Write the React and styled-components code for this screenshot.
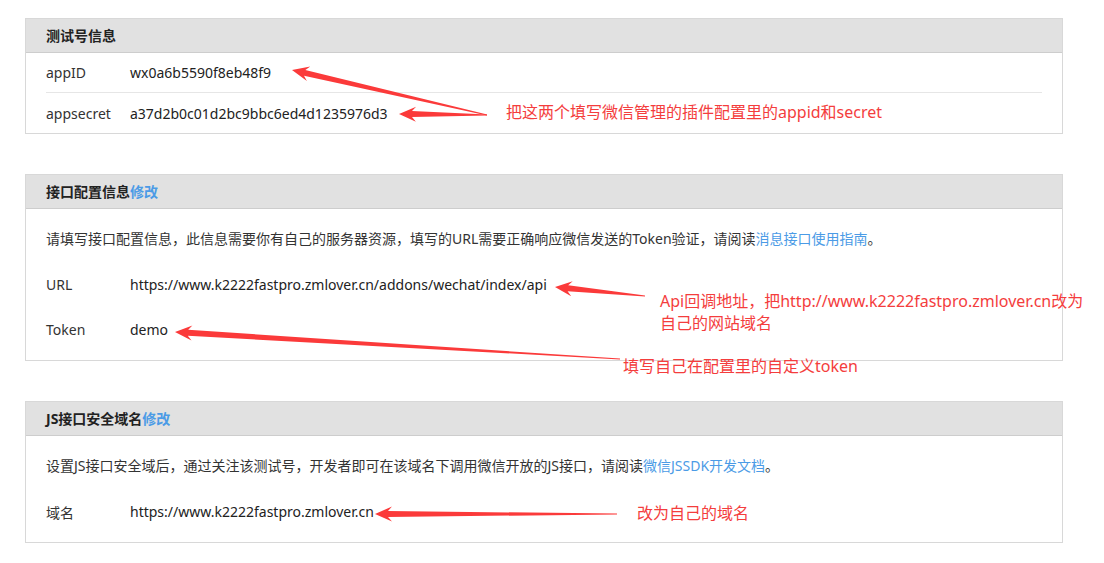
import React from "react";
import styled, { createGlobalStyle } from "styled-components";

const GlobalStyle = createGlobalStyle`
  html, body {
    margin: 0;
    padding: 0;
    background: #fff;
  }
  body {
    font-family: "Noto Sans", "Noto Sans CJK SC", sans-serif;
    color: #333;
  }
  * {
    box-sizing: border-box;
  }
`;

const Page = styled.div`
  position: relative;
  width: 1104px;
  height: 563px;
  padding: 18px 0 0 25px;
  overflow: hidden;
`;

const Panel = styled.section`
  width: 1038px;
  border: 1px solid #d8d8d8;
  background: #fff;
  margin-bottom: 40px;
`;

const PanelHeader = styled.div`
  height: 34px;
  line-height: 33px;
  padding: 0 20px;
  background: #e1e1e1;
  border-bottom: 1px solid #cdcdcd;
  font-size: 14px;
  font-weight: 700;
  color: #222;
`;

const HeaderLink = styled.a`
  color: #4b9be6;
  text-decoration: none;
`;

const InfoList = styled.div`
  padding: 0 20px;
`;

const InfoRow = styled.div`
  display: flex;
  align-items: center;
  height: 40px;
  font-size: 14px;
  border-bottom: ${(p) => (p.$last ? "none" : "1px solid #e6e6e6")};
`;

const PanelBody = styled.div`
  padding: 20px 20px 8px;
`;

const Desc = styled.p`
  margin: 0 0 13px;
  font-size: 14px;
  line-height: 20px;
  color: #333;
`;

const DescLink = styled.a`
  color: #4b9be6;
  text-decoration: none;
`;

const FieldRow = styled.div`
  display: flex;
  align-items: center;
  height: 45px;
  font-size: 14px;
`;

const Label = styled.span`
  width: 84px;
  flex-shrink: 0;
  color: #333;
`;

const Value = styled.span`
  color: #222;
`;

const Overlay = styled.svg`
  position: absolute;
  left: 0;
  top: 0;
  pointer-events: none;
`;

const Note = styled.span`
  position: absolute;
  font-size: 16px;
  line-height: 22px;
  color: #f43d3d;
  white-space: nowrap;
`;

// tapered annotation arrow, tail thin, head at tip
function arrowPoints([tx, ty], [hx, hy]) {
  const dx = hx - tx;
  const dy = hy - ty;
  const len = Math.hypot(dx, dy);
  const ux = dx / len;
  const uy = dy / len;
  const nx = -uy;
  const ny = ux;
  const headLen = 17;
  const headHalf = 7.5;
  const neck = 13;
  const at = (along, side) => [
    hx - ux * along + nx * side,
    hy - uy * along + ny * side,
  ];
  const pts = [
    [tx + nx * 0.4, ty + ny * 0.4],
    at(neck, 3),
    at(headLen, headHalf),
    [hx, hy],
    at(headLen, -headHalf),
    at(neck, -3),
    [tx - nx * 0.4, ty - ny * 0.4],
  ];
  return pts.map((p) => p.map((v) => v.toFixed(1)).join(",")).join(" ");
}

const arrows = [
  { tail: [487, 115], tip: [292, 70] },
  { tail: [487, 115], tip: [399, 114] },
  { tail: [645, 296], tip: [555, 287] },
  { tail: [620, 359], tip: [175, 332] },
  { tail: [617, 514], tip: [375, 514] },
];

export default function App() {
  return (
    <Page>
      <GlobalStyle />

      <Panel>
        <PanelHeader>测试号信息</PanelHeader>
        <InfoList>
          <InfoRow>
            <Label>appID</Label>
            <Value>wx0a6b5590f8eb48f9</Value>
          </InfoRow>
          <InfoRow $last>
            <Label>appsecret</Label>
            <Value>a37d2b0c01d2bc9bbc6ed4d1235976d3</Value>
          </InfoRow>
        </InfoList>
      </Panel>

      <Panel>
        <PanelHeader>
          接口配置信息<HeaderLink href="#">修改</HeaderLink>
        </PanelHeader>
        <PanelBody>
          <Desc>
            请填写接口配置信息，此信息需要你有自己的服务器资源，填写的URL需要正确响应微信发送的Token验证，请阅读
            <DescLink href="#">消息接口使用指南</DescLink>。
          </Desc>
          <FieldRow>
            <Label>URL</Label>
            <Value>https://www.k2222fastpro.zmlover.cn/addons/wechat/index/api</Value>
          </FieldRow>
          <FieldRow>
            <Label>Token</Label>
            <Value>demo</Value>
          </FieldRow>
        </PanelBody>
      </Panel>

      <Panel>
        <PanelHeader>
          JS接口安全域名<HeaderLink href="#">修改</HeaderLink>
        </PanelHeader>
        <PanelBody>
          <Desc>
            设置JS接口安全域后，通过关注该测试号，开发者即可在该域名下调用微信开放的JS接口，请阅读
            <DescLink href="#">微信JSSDK开发文档</DescLink>。
          </Desc>
          <FieldRow>
            <Label>域名</Label>
            <Value>https://www.k2222fastpro.zmlover.cn</Value>
          </FieldRow>
        </PanelBody>
      </Panel>

      <Overlay width="1104" height="563" viewBox="0 0 1104 563">
        {arrows.map((a, i) => (
          <polygon key={i} points={arrowPoints(a.tail, a.tip)} fill="#fb3a3a" />
        ))}
      </Overlay>

      <Note style={{ left: 506, top: 101 }}>把这两个填写微信管理的插件配置里的appid和secret</Note>
      <Note style={{ left: 660, top: 290 }}>
        Api回调地址，把http://www.k2222fastpro.zmlover.cn改为
        <br />
        自己的网站域名
      </Note>
      <Note style={{ left: 623, top: 355 }}>填写自己在配置里的自定义token</Note>
      <Note style={{ left: 637, top: 502 }}>改为自己的域名</Note>
    </Page>
  );
}
